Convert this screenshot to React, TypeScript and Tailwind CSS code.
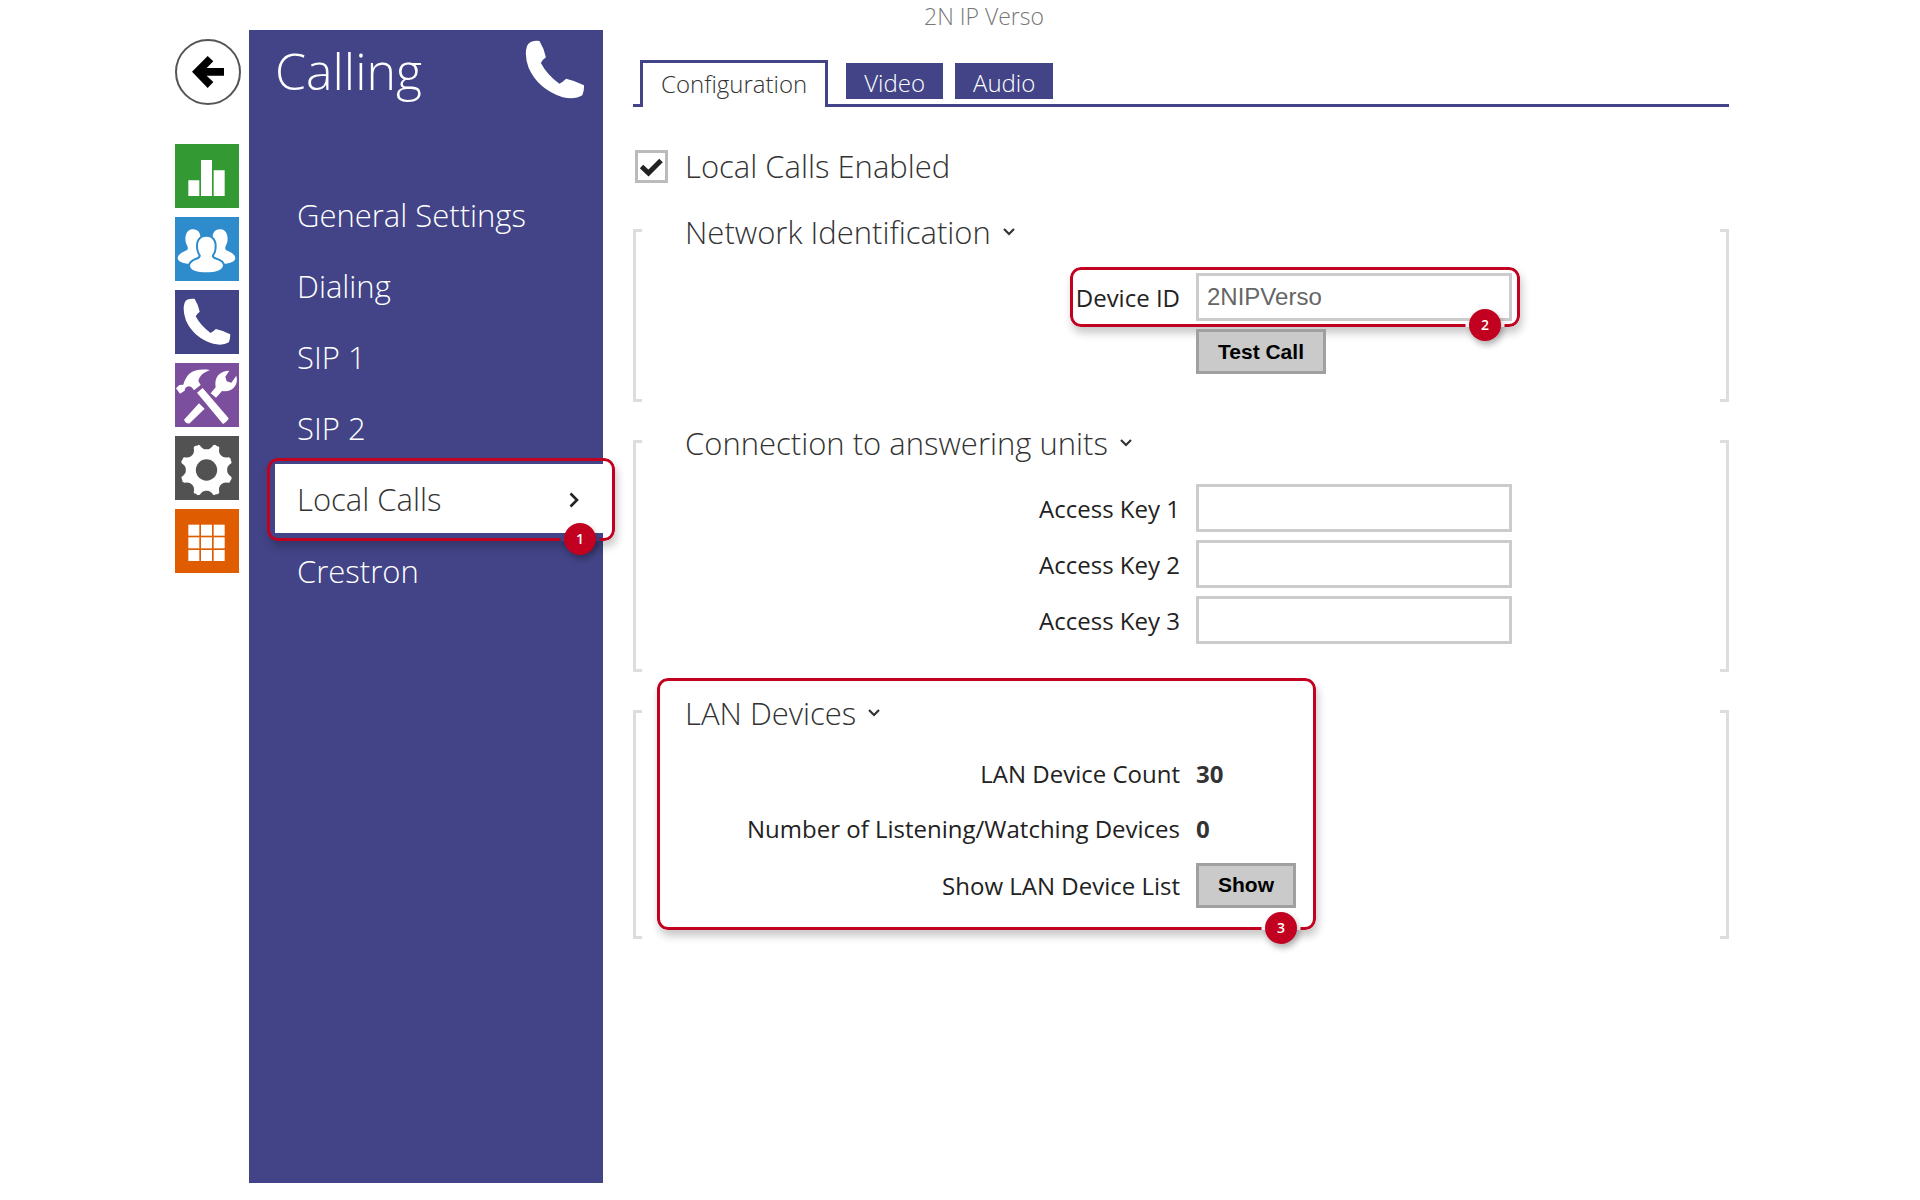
import { useState, type ReactNode } from "react";

const Handset = ({ className }: { className: string }) => (
  <svg viewBox="1095 120 178 178" className={className} fill="white" aria-hidden="true">
    <path d="M1112 126Q1125 121 1138 123Q1151 144 1157 171Q1148 177 1142 188Q1160 222 1197 250Q1208 244 1217 235Q1244 241 1270 254Q1271 270 1265 284Q1243 298 1207 290Q1134 266 1106 203Q1092 165 1101 138Q1104 130 1112 126Z" />
  </svg>
);

const BarsIcon = () => (
  <svg viewBox="0 0 192 192" className="size-16" fill="white" aria-hidden="true">
    <path d="M40 109h33v47H40zM78 48h33v108H78zM116 79h33v77h-33z" />
  </svg>
);

const PERSON =
  "M94 59C109 59 119 69 119 86C119 100 116 108 111 114C110 122 114 125 124 128C136 132 143 137 144 145C143 161 121 166 94 166C67 166 46 160 45 146C46 137 54 132 65 128C75 125 78 121 77 114C72 107 69 100 69 86C69 69 79 59 94 59Z";

const PeopleIcon = () => (
  <svg viewBox="0 0 192 192" className="size-16" fill="white" aria-hidden="true">
    <path d="M52 37C67 36 77 46 76 62C76 78 68 90 73 98C79 103 92 104 97 112C88 134 60 142 36 140C20 138 8 132 8 123C9 113 20 106 30 102C40 99 40 94 36 85C28 74 28 39 52 37Z" />
    <path d="M137 37C122 36 112 46 113 62C113 78 121 90 116 98C110 103 97 104 92 112C101 134 129 142 153 140C169 138 181 132 181 123C180 113 169 106 159 102C149 99 149 94 153 85C161 74 161 39 137 37Z" />
    <path d={PERSON} stroke="#2e8bcc" strokeWidth="12" />
    <path d={PERSON} />
  </svg>
);

const ToolsIcon = () => (
  <svg viewBox="0 0 192 192" className="size-16" fill="white" aria-hidden="true">
    <path d="M43 32C58 20 78 18 105 21C86 28 74 37 70 54L77 66L57 82C52 74 48 70 40 70C32 72 30 76 29 83L15 92L3 76L13 66L25 65C28 52 35 40 43 32Z" />
    <path d="M66 89L83 75L161 166Q159 174 144 183Z" />
    <path d="M72 121L89 137L44 181Q34 184 27 170Z" />
    <path d="M107 91L122 73C117 43 133 23 163 23L151 41L155 55L169 59L184 38C192 64 172 90 141 84L123 104Z" />
  </svg>
);

function polar(deg: number, r: number) {
  const t = (deg * Math.PI) / 180;
  return `${(94.5 + r * Math.sin(t)).toFixed(1)} ${(102 - r * Math.cos(t)).toFixed(1)}`;
}

const GEAR =
  "M" +
  [0, 45, 90, 135, 180, 225, 270, 315]
    .map(
      (v) =>
        `${polar(v - 19, 80)}L${polar(v - 15, 77)}Q${polar(v - 11, 62)} ${polar(v, 62)}Q${polar(v + 11, 62)} ${polar(v + 15, 77)}L${polar(v + 19, 80)}L${polar(v + 26, 78)}`,
    )
    .join("L") +
  "Z";

const GearIcon = () => (
  <svg viewBox="0 0 192 192" className="size-16" fill="white" aria-hidden="true">
    <path d={GEAR} />
    <circle cx="94.5" cy="102" r="32" fill="#525252" />
  </svg>
);

const GridIcon = () => (
  <svg viewBox="0 0 192 192" className="size-16" fill="white" aria-hidden="true">
    {[47, 85, 123].map((y) =>
      [40, 78, 116].map((x) => <rect key={`${x}-${y}`} x={x} y={y} width="33" height="33" />),
    )}
  </svg>
);

const RAIL = [
  { name: "Status", bg: "bg-[#339933]", icon: <BarsIcon /> },
  { name: "Directory", bg: "bg-[#2e8bcc]", icon: <PeopleIcon /> },
  { name: "Calling", bg: "bg-[#424487]", icon: <Handset className="size-12" /> },
  { name: "Services", bg: "bg-[#7b4f9d]", icon: <ToolsIcon /> },
  { name: "System", bg: "bg-[#525252]", icon: <GearIcon /> },
  { name: "Applications", bg: "bg-[#e05c00]", icon: <GridIcon /> },
];

const NAV = ["General Settings", "Dialing", "SIP 1", "SIP 2", "Local Calls", "Crestron"];

/* Numbered red frame laid over the part of the page it points out. */
function Callout({ n, className }: { n: number; className: string }) {
  return (
    <span
      className={`pointer-events-none absolute rounded-[11px] shadow-[2px_6px_8px_rgba(0,0,0,0.22)] ${className}`}
    >
      <span className="absolute inset-0 rounded-[11px] border-3 border-[#c2001f] [mask-image:radial-gradient(circle_at_calc(100%_-_35px)_calc(100%_-_2px),transparent_19px,black_20px)]" />
      <span className="absolute right-[19px] -bottom-[14px] flex size-8 items-center justify-center rounded-full bg-[#c2001f] text-sm font-semibold text-white shadow-[2px_4px_6px_rgba(0,0,0,0.3)]">
        {n}
      </span>
    </span>
  );
}

function Panel({ title, children }: { title: string; children: ReactNode }) {
  return (
    <section className="relative flex">
      <span className="w-[9px] shrink-0 border-y-3 border-l-3 border-[#dddddd]" />
      <div className="min-w-0 flex-1 pb-7">
        <h2 className="-mt-[17px] pl-[43px]">
          <button className="flex h-10 items-center gap-3 text-[31px] leading-10 font-light text-[#333333]">
            {title}
            <svg viewBox="0 0 12 8" className="h-2 w-3" fill="none" stroke="#333" strokeWidth="2.2" aria-hidden="true">
              <path d="M1 1l5 5 5-5" />
            </svg>
          </button>
        </h2>
        <div className="flex flex-col gap-2 pt-[21px] pl-[14px] text-[#222222]">{children}</div>
      </div>
      <span className="w-[9px] shrink-0 border-y-3 border-r-3 border-[#dddddd]" />
    </section>
  );
}

const ROW = "relative grid grid-cols-2 items-center gap-x-4";
const LABEL = "pt-[2px] text-right text-2xl leading-8";
const VALUE = "pt-[2px] text-2xl leading-8 font-bold text-[#333333]";
const INPUT =
  "h-12 w-[316px] border-3 border-[#cccccc] bg-white px-2 font-['Liberation_Sans',sans-serif] text-2xl text-[#666666] outline-none";
const BUTTON =
  "h-[45px] justify-self-start border-3 border-[#a0a0a0] bg-[#cacaca] px-[19px] font-['Liberation_Sans',sans-serif] text-[21px] font-bold text-black";

export default function App() {
  const [enabled, setEnabled] = useState(true);
  const [deviceId, setDeviceId] = useState("2NIPVerso");

  return (
    <div className="flex min-h-screen flex-col bg-white pb-[17px] font-['Open_Sans',sans-serif]">
      <header className="h-[30px] pl-12 text-center text-[23px] leading-8 font-light text-[#777777]">2N IP Verso</header>

      <div className="flex flex-1 pr-[191px] pl-[175px]">
        <nav className="mr-2 flex w-[66px] shrink-0 flex-col gap-[9px] pt-[9px]" aria-label="Sections">
          <button
            aria-label="Back"
            className="mb-[30px] flex size-[66px] items-center justify-center rounded-full border-2 border-[#555555]"
          >
            <svg viewBox="96 168 96 96" className="size-8" aria-hidden="true">
              <path d="M96 215L143 168L160 184L140 204H192V227H140L160 246L143 264Z" />
            </svg>
          </button>
          {RAIL.map((item) => (
            <a
              key={item.name}
              href="#"
              aria-label={item.name}
              className={`flex size-16 items-center justify-center ${item.bg}`}
            >
              {item.icon}
            </a>
          ))}
        </nav>

        <aside className="w-[354px] shrink-0 bg-[#424487] text-white">
          <div className="flex items-start justify-between pr-[18px] pl-[26px]">
            <h1 className="pt-[5px] text-[50px] leading-[72px] font-light">Calling</h1>
            <Handset className="mt-[10px] size-[60px]" />
          </div>
          <ul className="mt-[73px] ml-[26px] flex flex-col gap-[3px]">
            {NAV.map((item) => (
              <li key={item} className="relative">
                <a
                  href="#"
                  className={
                    item === "Local Calls"
                      ? "flex h-[69px] items-center justify-between bg-white pt-[2px] pr-6 pl-[22px] text-[31px] font-light text-[#333333]"
                      : "flex h-[68px] items-center pt-[2px] pl-[22px] text-[31px] font-light"
                  }
                >
                  {item}
                  {item === "Local Calls" && (
                    <svg viewBox="0 0 10 16" className="h-4 w-[10px]" fill="none" stroke="#222" strokeWidth="2.6" aria-hidden="true">
                      <path d="M1.5 1.5L8 8l-6.500 6.500" />
                    </svg>
                  )}
                </a>
                {item === "Local Calls" && <Callout n={1} className="-top-[6px] -right-3 -bottom-2 -left-2" />}
              </li>
            ))}
          </ul>
        </aside>

        <main className="ml-[30px] min-w-0 flex-1">
          <div className="flex h-[77px] items-end text-2xl leading-8 font-light" role="tablist">
            <span className="w-[7px] border-b-3 border-[#424487]" />
            <button
              role="tab"
              aria-selected="true"
              className="h-[47px] border-x-3 border-t-3 border-[#424487] px-[18px] pb-[3px] text-[#333333]"
            >
              Configuration
            </button>
            <div className="flex h-[47px] flex-1 gap-3 border-b-3 border-[#424487] pt-[3px] pl-[18px] text-white">
              <button role="tab" aria-selected="false" className="h-9 bg-[#424487] px-[18px] pt-[3px]">Video</button>
              <button role="tab" aria-selected="false" className="h-9 bg-[#424487] px-[18px] pt-[3px]">Audio</button>
            </div>
          </div>

          <label className="mt-[39px] flex h-10 w-fit items-center text-[31px] leading-10 font-light text-[#333333]">
            <span className="relative ml-[2px] size-[33px]">
              <input
                type="checkbox"
                checked={enabled}
                onChange={(e) => setEnabled(e.target.checked)}
                className="block size-[33px] appearance-none border-3 border-[#bbbbbb] bg-white"
              />
              {enabled && (
                <svg viewBox="0 0 33 33" className="pointer-events-none absolute inset-0" fill="none" stroke="#222" strokeWidth="5" aria-hidden="true">
                  <path d="M6.500 16.500L13.500 23L26 10.500" />
                </svg>
              )}
            </span>
            <span className="ml-[17px]">Local Calls Enabled</span>
          </label>

          <div className="mt-[43px] flex flex-col gap-[38px]">
            <Panel title="Network Identification">
              <div className={ROW}>
                <label htmlFor="device-id" className={LABEL}>Device ID</label>
                <input id="device-id" className={INPUT} value={deviceId} onChange={(e) => setDeviceId(e.target.value)} />
                <Callout n={2} className="-top-[6px] -bottom-[6px] left-[calc(50%-118px)] w-[450px]" />
              </div>
              <div className={ROW}>
                <button className={`col-start-2 ${BUTTON}`}>Test Call</button>
              </div>
            </Panel>

            <Panel title="Connection to answering units">
              {[1, 2, 3].map((n) => (
                <div key={n} className={ROW}>
                  <label htmlFor={`key-${n}`} className={LABEL}>Access Key {n}</label>
                  <input id={`key-${n}`} className={INPUT} />
                </div>
              ))}
            </Panel>

            <Panel title="LAN Devices">
              <div className={`-mt-[5px] h-[47px] ${ROW}`}>
                <span className={LABEL}>LAN Device Count</span>
                <b className={VALUE}>30</b>
              </div>
              <div className={`h-[47px] ${ROW}`}>
                <span className={LABEL}>Number of Listening/Watching Devices</span>
                <b className={VALUE}>0</b>
              </div>
              <div className={`h-[52px] ${ROW}`}>
                <label htmlFor="show-list" className={LABEL}>Show LAN Device List</label>
                <button id="show-list" className={BUTTON}>Show</button>
              </div>
              <Callout n={3} className="-top-8 right-[calc(50%-135px)] bottom-[9px] left-6" />
            </Panel>
          </div>
        </main>
      </div>
    </div>
  );
}
